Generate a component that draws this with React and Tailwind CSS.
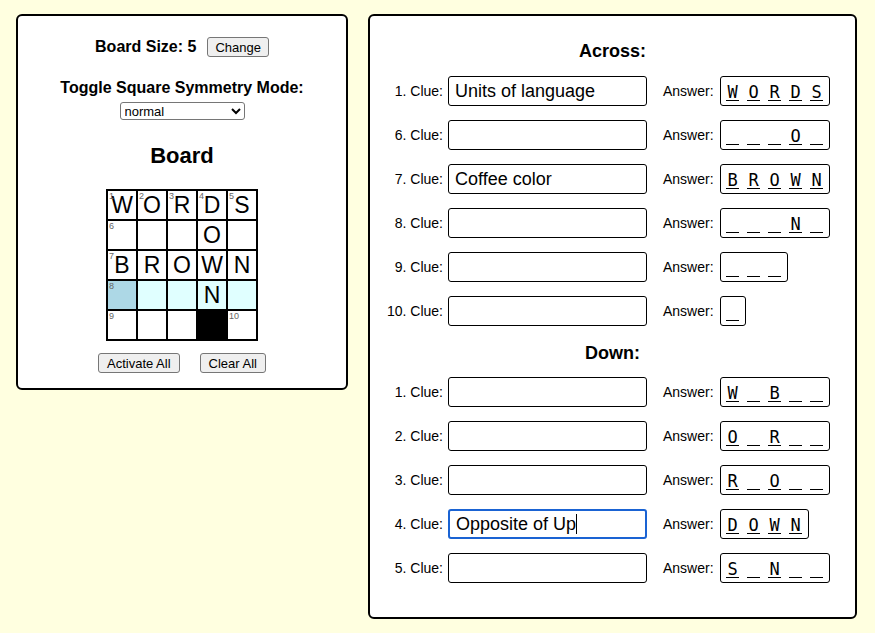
import React from 'react'

const GRID = [
    [{ n: 1, l: 'W' }, { n: 2, l: 'O' }, { n: 3, l: 'R' }, { n: 4, l: 'D' }, { n: 5, l: 'S' }],
    [{ n: 6 }, {}, {}, { l: 'O' }, {}],
    [{ n: 7, l: 'B' }, { l: 'R' }, { l: 'O' }, { l: 'W' }, { l: 'N' }],
    [{ n: 8, bg: 'sel' }, { bg: 'row' }, { bg: 'row' }, { l: 'N', bg: 'row' }, { bg: 'row' }],
    [{ n: 9 }, {}, {}, { bg: 'black' }, { n: 10 }],
];

const ACROSS = [
    { n: 1, clue: 'Units of language', ans: 'WORDS' },
    { n: 6, clue: '', ans: '___O_' },
    { n: 7, clue: 'Coffee color', ans: 'BROWN' },
    { n: 8, clue: '', ans: '___N_' },
    { n: 9, clue: '', ans: '___' },
    { n: 10, clue: '', ans: '_' },
];

const DOWN = [
    { n: 1, clue: '', ans: 'W_B__' },
    { n: 2, clue: '', ans: 'O_R__' },
    { n: 3, clue: '', ans: 'R_O__' },
    { n: 4, clue: 'Opposite of Up', ans: 'DOWN', focused: true },
    { n: 5, clue: '', ans: 'S_N__' },
];

const Cell = ({ cell }) => {
    let bg = 'bg-white';
    if (cell.bg === 'sel') bg = 'bg-[#add8e6]';
    if (cell.bg === 'row') bg = 'bg-[#e0ffff]';
    if (cell.bg === 'black') bg = 'bg-black';
    return (
        <td className={`relative w-[30px] h-[30px] p-0 border-2 border-black ${bg}`}>
            {cell.n && (
                <span className="absolute left-[1px] top-0 text-[9px] leading-[10px] text-[#666]">{cell.n}</span>
            )}
            <div className="w-[28px] h-[28px] flex items-center justify-center text-[23px] leading-none">
                {cell.l || ''}
            </div>
        </td>
    );
};

// each square of the answer: a letter sitting on a short rule, or just the rule
const Answer = ({ ans }) => (
    <div className="h-[30px] flex items-center gap-[5px] px-[4px] border border-black rounded-[3px] bg-white font-['DejaVu_Sans_Mono',monospace] text-[17px]">
        {ans.split('').map((ch, i) => (
            <span key={i} className="w-[16px] flex justify-center">
                <span className="w-[13px] h-[19px] flex items-end justify-center leading-[16px] border-b-[1.5px] border-black">
                    {ch === '_' ? '' : ch}
                </span>
            </span>
        ))}
    </div>
);

const ClueRow = ({ item }) => (
    <div className="flex items-center h-[30px]">
        <label className="w-[75px] text-right text-[14px] pr-[5px]">{item.n}. Clue:</label>
        {item.focused ? (
            <div className="w-[199px] h-[30px] flex items-center px-[6px] border-2 border-[#1a63d3] rounded-[3px] bg-white text-[18px]">
                {item.clue}
                <span className="inline-block w-[1px] h-[20px] bg-black"></span>
            </div>
        ) : (
            <input
                type="text"
                defaultValue={item.clue}
                className="w-[199px] h-[30px] px-[6px] border border-black rounded-[3px] bg-white text-[18px] outline-none"
            />
        )}
        <span className="ml-[16px] mr-[6px] text-[14px]">Answer:</span>
        <Answer ans={item.ans} />
    </div>
);

const App = () => {
    return (
        <div className="min-h-screen bg-[#ffffe0] pt-[14px] pl-[16px] flex items-start gap-[20px] font-['Liberation_Sans',Arial,sans-serif] text-black">
            {/* board panel */}
            <div className="w-[332px] h-[376px] bg-white border-2 border-black rounded-[6px] flex flex-col items-center pt-[19px]">
                <div className="flex items-center gap-[11px]">
                    <span className="font-bold text-[16px]">Board Size: 5</span>
                    <button className="h-[20px] px-[7px] text-[13px] bg-[#efefef] border border-[#767676] rounded-[3px]">Change</button>
                </div>
                <div className="mt-[19px] font-bold text-[16px] leading-[20px]">Toggle Square Symmetry Mode:</div>
                <select className="mt-[4px] w-[125px] h-[18px] text-[13px] border border-[#767676] rounded-[3px] bg-white">
                    <option>normal</option>
                    <option>rotational</option>
                    <option>none</option>
                </select>
                <h2 className="mt-[23px] font-bold text-[22px] leading-[26px]">Board</h2>
                <table className="mt-[20px] border-collapse">
                    <tbody>
                        {GRID.map((row, r) => (
                            <tr key={r}>
                                {row.map((cell, c) => <Cell key={c} cell={cell} />)}
                            </tr>
                        ))}
                    </tbody>
                </table>
                <div className="mt-[12px] flex gap-[20px]">
                    <button className="h-[20px] px-[8px] text-[13px] bg-[#efefef] border border-[#767676] rounded-[3px]">Activate All</button>
                    <button className="h-[20px] px-[8px] text-[13px] bg-[#efefef] border border-[#767676] rounded-[3px]">Clear All</button>
                </div>
            </div>

            {/* clues panel */}
            <div className="w-[489px] h-[605px] bg-white border-2 border-black rounded-[6px] pt-[24px] pl-[3px]">
                <h3 className="text-center font-bold text-[18px] leading-[22px] pr-[3px]">Across:</h3>
                <div className="mt-[14px] flex flex-col gap-[14px]">
                    {ACROSS.map((item) => <ClueRow key={item.n} item={item} />)}
                </div>
                <h3 className="mt-[16px] text-center font-bold text-[18px] leading-[22px] pr-[3px]">Down:</h3>
                <div className="mt-[13px] flex flex-col gap-[14px]">
                    {DOWN.map((item) => <ClueRow key={item.n} item={item} />)}
                </div>
            </div>
        </div>
    )
}

export default App
